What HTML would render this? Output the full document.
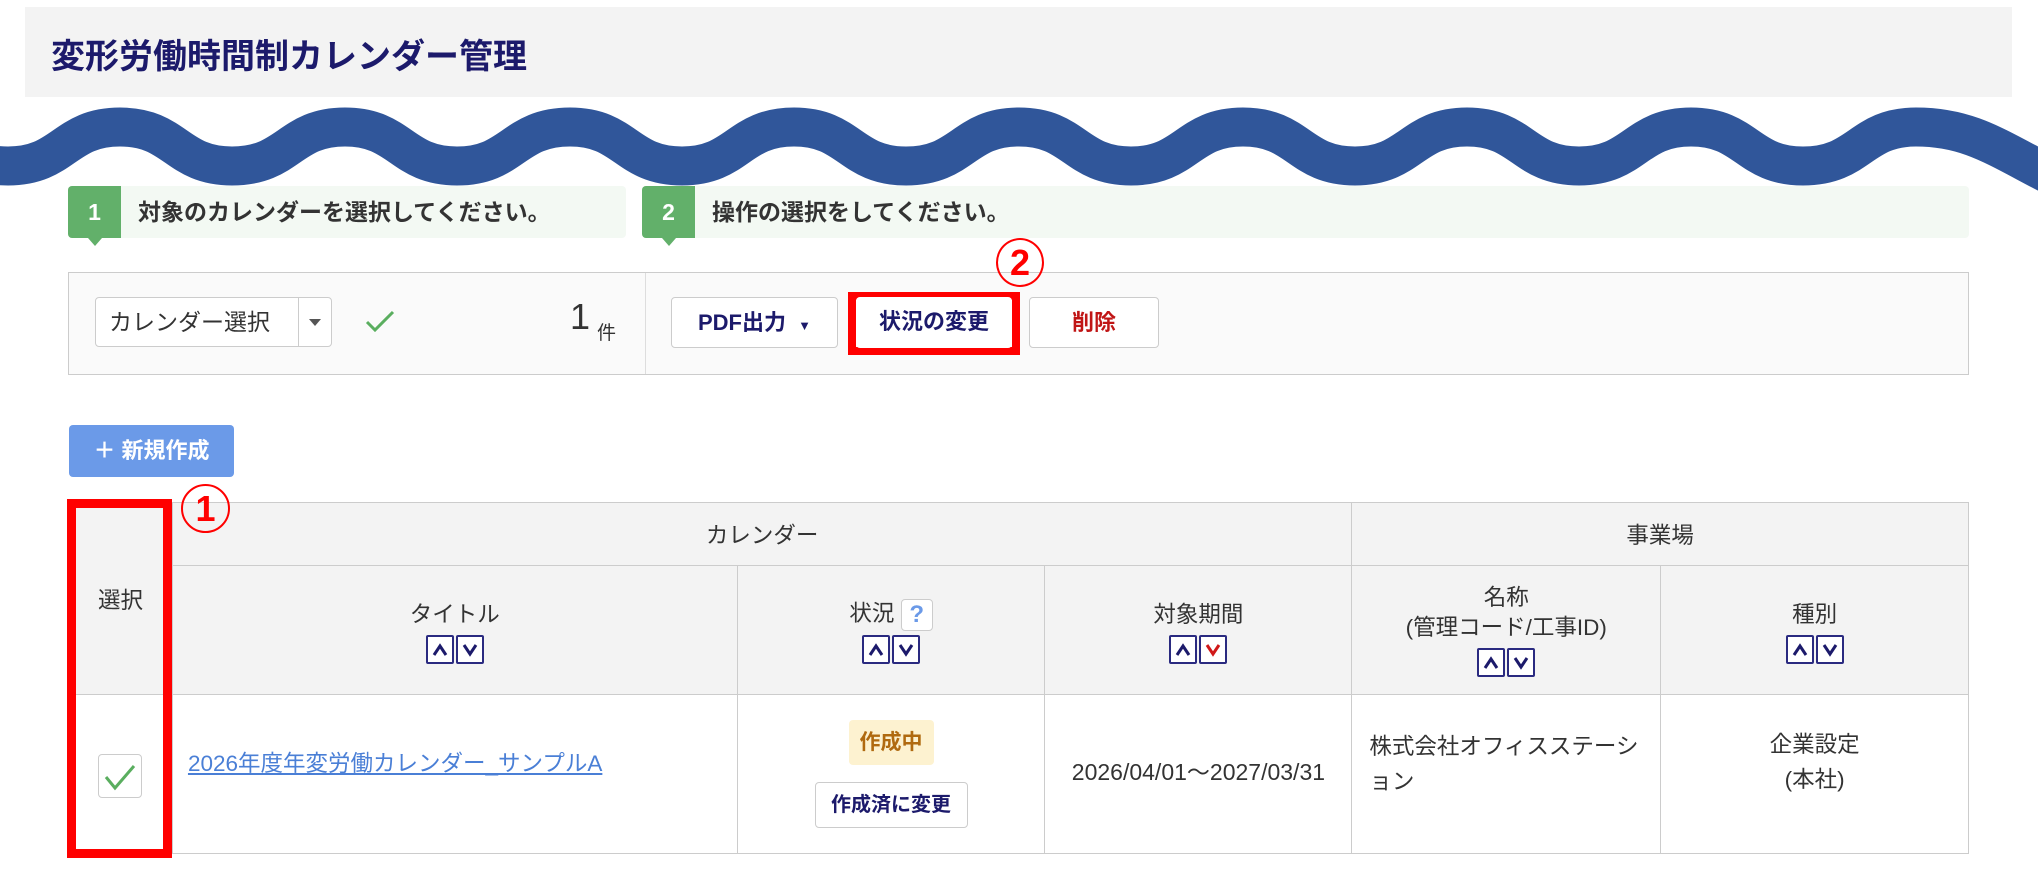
<!DOCTYPE html>
<html><head><meta charset="utf-8">
<style>
*{margin:0;padding:0;box-sizing:border-box}
body{width:2038px;height:883px;background:#fff;position:relative;overflow:hidden;font-family:"Liberation Sans","Noto Sans CJK JP",sans-serif;color:#333}
.a{position:absolute}
.hdr{left:25px;top:7px;width:1987px;height:90px;background:#f3f3f3}
.hdr h1{position:absolute;left:26px;top:22px;font-size:34px;font-weight:bold;color:#1c1a6b;letter-spacing:0px}
.step{top:186px;height:52px;background:#f3f9f3;border-radius:4px}
.num{position:absolute;left:0;top:0;width:53px;height:52px;background:#62b06a;color:#fff;font-weight:bold;font-size:23px;text-align:center;line-height:52px;border-radius:4px 0 0 4px}
.num:after{content:"";position:absolute;left:20px;bottom:-8px;border-left:7px solid transparent;border-right:7px solid transparent;border-top:8px solid #62b06a}
.st{position:absolute;left:70px;top:0;line-height:52px;font-size:23px;font-weight:bold;color:#333}
.panel{left:68px;top:272px;width:1901px;height:103px;background:#fafafa;border:1px solid #ccc}
.btn{position:absolute;background:#fff;border:1px solid #ccc;border-radius:4px;font-weight:bold;font-size:22px;text-align:center}
table{position:absolute;left:68px;top:502px;border-collapse:collapse;width:1901px;font-size:22.5px}
td,th{border:1px solid #ccc;font-weight:normal;text-align:center;vertical-align:middle}
th{background:#f3f3f3}
.sort{display:inline-block;width:28px;height:29px;border:2px solid #2a2a80;border-radius:2px;margin:0 1px;background:#fff;vertical-align:middle;position:relative}
.sort svg{position:absolute;left:4px;top:6px}
</style></head><body>
<div class="a hdr"><h1>変形労働時間制カレンダー管理</h1></div>
<svg class="a" style="left:0;top:95px" width="2038" height="110" viewBox="0 95 2038 110">
<path fill="none" stroke="#30569a" stroke-width="39" d="M-216 166 C-160 166 -104 127 -104 127 C-48 127 -48 166 8 166 C64 166 64 127 120 127 C176 127 176 166 232 166 C289 166 289 127 345 127 C401 127 401 166 457 166 C513 166 513 127 570 127 C626 127 626 166 682 166 C738 166 738 127 794 127 C850 127 850 166 906 166 C963 166 963 127 1019 127 C1075 127 1075 166 1131 166 C1187 166 1187 127 1243 127 C1299 127 1299 166 1355 166 C1411 166 1411 127 1467 127 C1523 127 1523 166 1579 166 C1635 166 1635 127 1691 127 C1747 127 1747 166 1803 166 C1860 166 1860 127 1916 127 C1972 127 2000 150 2060 180"/>
</svg>
<div class="a step" style="left:68px;width:558px"><div class="num">1</div><div class="st">対象のカレンダーを選択してください。</div></div>
<div class="a step" style="left:642px;width:1327px"><div class="num">2</div><div class="st">操作の選択をしてください。</div></div>
<div class="a panel"></div>
<div class="a" style="left:645px;top:273px;width:1px;height:101px;background:#ddd"></div>
<div class="a" style="left:95px;top:297px;width:237px;height:50px;background:#fff;border:1px solid #ccc;border-radius:4px">
<div class="a" style="left:13px;top:0;line-height:48px;font-size:23px;color:#333">カレンダー選択</div>
<div class="a" style="left:202px;top:0;width:1px;height:48px;background:#ccc"></div>
<div class="a" style="left:213px;top:21px;border-left:6px solid transparent;border-right:6px solid transparent;border-top:7px solid #555"></div>
</div>
<svg class="a" style="left:365px;top:310px" width="30" height="22"><path d="M2 12 L10 20 L28 2" fill="none" stroke="#5aae5f" stroke-width="3"/></svg>
<div class="a" style="left:570px;top:296px;font-size:36px;color:#333">1</div>
<div class="a" style="left:597px;top:318px;font-size:19px;color:#333">件</div>
<div class="btn" style="left:671px;top:297px;width:167px;height:51px;line-height:49px;color:#1c1a6b">PDF出力 <span style="font-size:13px;margin-left:6px">▼</span></div>
<div class="a" style="left:848px;top:292px;width:172px;height:63px;border:8px solid #f00"></div>
<div class="btn" style="left:856px;top:297px;width:156px;height:51px;line-height:49px;color:#1c1a6b;border:none">状況の変更</div>
<div class="btn" style="left:1029px;top:297px;width:130px;height:51px;line-height:49px;color:#c01515">削除</div>
<div class="a" style="left:996px;top:238px;width:48px;height:49px;border:2px solid #f00;border-radius:50%;color:#f00;font-weight:bold;font-size:36px;text-align:center;line-height:45px">2</div>
<div class="a" style="left:69px;top:425px;width:165px;height:52px;background:#6b9ae8;border-radius:4px;color:#fff;font-weight:bold;font-size:22px;line-height:52px;text-align:center">＋ 新規作成</div>
<table>
<colgroup><col style="width:104px"><col style="width:565px"><col style="width:308px"><col style="width:307px"><col style="width:309px"><col style="width:308px"></colgroup>
<tr style="height:63px"><th rowspan="2">選択</th><th colspan="3">カレンダー</th><th colspan="2">事業場</th></tr>
<tr style="height:129px">
<th>タイトル<br><span style="display:inline-block;margin-top:6px"><span class="sort"><svg width="16" height="14"><path d="M2 12 L8 3 L14 12" fill="none" stroke="#1c1a6b" stroke-width="3"/></svg></span><span class="sort"><svg width="16" height="14"><path d="M2 2 L8 11 L14 2" fill="none" stroke="#1c1a6b" stroke-width="3"/></svg></span></span></th>
<th>状況 <span style="display:inline-block;width:32px;height:32px;border:1px solid #ccc;border-radius:4px;background:#fff;color:#6b9ae8;font-weight:bold;font-size:24px;line-height:30px;vertical-align:middle">?</span><br><span style="display:inline-block;margin-top:4px"><span class="sort"><svg width="16" height="14"><path d="M2 12 L8 3 L14 12" fill="none" stroke="#1c1a6b" stroke-width="3"/></svg></span><span class="sort"><svg width="16" height="14"><path d="M2 2 L8 11 L14 2" fill="none" stroke="#1c1a6b" stroke-width="3"/></svg></span></span></th>
<th>対象期間<br><span style="display:inline-block;margin-top:6px"><span class="sort"><svg width="16" height="14"><path d="M2 12 L8 3 L14 12" fill="none" stroke="#1c1a6b" stroke-width="3"/></svg></span><span class="sort"><svg width="16" height="14"><path d="M2 2 L8 11 L14 2" fill="none" stroke="#d01818" stroke-width="3"/></svg></span></span></th>
<th style="line-height:30px">名称<br>(管理コード/工事ID)<br><span style="display:inline-block;margin-top:4px"><span class="sort"><svg width="16" height="14"><path d="M2 12 L8 3 L14 12" fill="none" stroke="#1c1a6b" stroke-width="3"/></svg></span><span class="sort"><svg width="16" height="14"><path d="M2 2 L8 11 L14 2" fill="none" stroke="#1c1a6b" stroke-width="3"/></svg></span></span></th>
<th>種別<br><span style="display:inline-block;margin-top:6px"><span class="sort"><svg width="16" height="14"><path d="M2 12 L8 3 L14 12" fill="none" stroke="#1c1a6b" stroke-width="3"/></svg></span><span class="sort"><svg width="16" height="14"><path d="M2 2 L8 11 L14 2" fill="none" stroke="#1c1a6b" stroke-width="3"/></svg></span></span></th>
</tr>
<tr style="height:159px">
<td><span style="display:inline-block;width:44px;height:44px;border:1px solid #ccc;border-radius:4px;background:#fff;vertical-align:middle;position:relative;top:2px"><svg width="40" height="40" style="margin-top:2px"><path d="M6 20 L15 31 L34 9" fill="none" stroke="#5aae5f" stroke-width="3"/></svg></span></td>
<td style="text-align:left;padding-left:15px;color:#4a7fd6;vertical-align:middle"><span style="position:relative;top:-12px;text-decoration:underline">2026年度年変労働カレンダー_サンプルA</span></td>
<td><div style="display:inline-block;width:85px;height:45px;background:#fdf2d0;border-radius:4px;color:#b06a10;font-weight:bold;font-size:21px;line-height:45px">作成中</div><br><div style="display:inline-block;margin-top:17px;width:153px;height:46px;border:1px solid #ccc;border-radius:4px;background:#fff;color:#1c1a6b;font-weight:bold;font-size:20px;line-height:44px">作成済に変更</div></td>
<td><span style="position:relative;top:-4px;font-size:23px">2026/04/01～2027/03/31</span></td>
<td style="text-align:left;padding-left:17px;line-height:35px"><span style="position:relative;top:-10px;display:block">株式会社オフィスステーシ<br>ョン</span></td>
<td style="line-height:35px"><span style="position:relative;top:-12px;display:block">企業設定<br>(本社)</span></td>
</tr>
</table>
<div class="a" style="left:67px;top:499px;width:105px;height:359px;border:9px solid #f00"></div>
<div class="a" style="left:181px;top:484px;width:49px;height:49px;border:2px solid #f00;border-radius:50%;color:#f00;font-weight:bold;font-size:36px;text-align:center;line-height:45px;background:transparent">1</div>
</body></html>
